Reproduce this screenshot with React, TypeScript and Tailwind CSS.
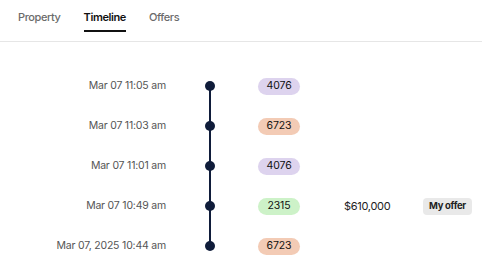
import React from "react";

type Row = { date: string; code: string; color: string; price?: string; badge?: string };

const rows: Row[] = [
  { date: "Mar 07 11:05 am", code: "4076", color: "bg-[#ddd3ee]" },
  { date: "Mar 07 11:03 am", code: "6723", color: "bg-[#f3cbb5]" },
  { date: "Mar 07 11:01 am", code: "4076", color: "bg-[#ddd3ee]" },
  { date: "Mar 07 10:49 am", code: "2315", color: "bg-[#cdf2c8]", price: "$610,000", badge: "My offer" },
  { date: "Mar 07, 2025 10:44 am", code: "6723", color: "bg-[#f3cbb5]" },
];

export default function App() {
  return (
    <div className="w-[482px] h-[273px] bg-white overflow-hidden" style={{ fontFamily: "Inter, 'Noto Sans', sans-serif" }}>
      <div className="flex h-[42px] border-b border-[#e6e6e6] px-[18px] gap-[23px]">
        <div className="pt-[9px] text-[11px] tracking-[-0.4px] text-[#6b6b6b] font-medium">Property</div>
        <div className="pt-[9px] text-[11px] tracking-[-0.4px] text-[#111] font-semibold">
          <div className="pb-[4px] border-b-2 border-[#111]">Timeline</div>
        </div>
        <div className="pt-[9px] text-[11px] tracking-[-0.4px] text-[#6b6b6b] font-medium">Offers</div>
      </div>
      <div className="pt-[24px]">
        {rows.map((r, i) => (
          <div key={i} className="flex h-[40px] items-center">
            <div className="w-[166px] text-right text-[10.5px] tracking-[-0.2px] text-[#555]">{r.date}</div>
            <div className="relative w-[40px] h-full ml-[24px] flex items-center justify-center">
              {i > 0 && <div className="absolute left-[19px] top-0 h-1/2 w-[2px] bg-[#0f1c3a]" />}
              {i < rows.length - 1 && <div className="absolute left-[19px] top-1/2 h-1/2 w-[2px] bg-[#0f1c3a]" />}
              <div className="relative w-[10px] h-[10px] rounded-full bg-[#0f1c3a]" />
            </div>
            <div className={`ml-[28px] w-[42px] h-[17px] rounded-full ${r.color} flex items-center justify-center text-[10.5px] tracking-[-0.1px] text-[#111]`}>
              {r.code}
            </div>
            {r.price && <div className="ml-[44px] w-[79px] text-[11px] tracking-[-0.3px] text-[#222]">{r.price}</div>}
            {r.badge && (
              <div className="h-[17px] px-[6px] rounded-[4px] bg-[#e9e9e9] text-[9.5px] tracking-[-0.3px] font-bold text-[#222] flex items-center">
                {r.badge}
              </div>
            )}
          </div>
        ))}
      </div>
    </div>
  );
}
